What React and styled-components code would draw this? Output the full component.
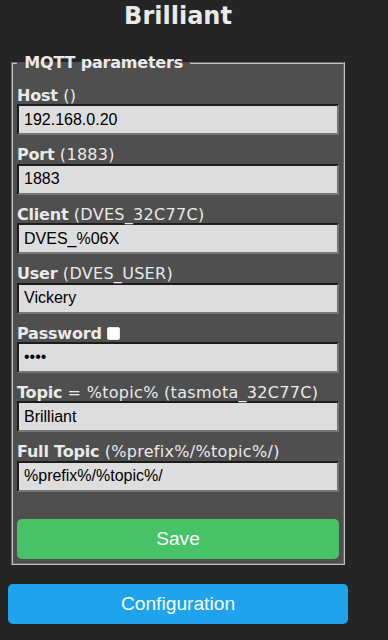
import styled, { createGlobalStyle } from "styled-components";

const GlobalStyle = createGlobalStyle`
  body {
    margin: 0;
    background: #252525;
    font-family: "DejaVu Sans", Verdana, sans-serif;
    font-size: 16px;
  }
`;

const Page = styled.div`
  width: 340px;
  padding: 0 8px;
  color: #eaeaea;
`;

const Title = styled.h2`
  margin: 2px 0 0;
  font-size: 24px;
  line-height: 28px;
  font-weight: bold;
  text-align: center;
`;

const Fieldset = styled.fieldset`
  margin: 25px 3px 0;
  padding: 5px 4px 4px;
  border: 2px groove #c0c0c0;
  background: #4f4f4f;
  min-width: 0;
`;

const Legend = styled.legend`
  padding: 0 2px;
  font-weight: bold;
  line-height: 16px;
  letter-spacing: -0.2px;
`;

const Field = styled.div`
  margin: 8px 0;
`;

// line-height is taller than the box so the text sits a little lower
const Label = styled.div`
  line-height: 23px;
  height: 20.4px;
  white-space: nowrap;
  letter-spacing: 0.3px;

  b {
    letter-spacing: -0.2px;
  }
`;

const Check = styled.input`
  appearance: none;
  width: 13px;
  height: 13px;
  margin: 0 0 0 5px;
  background: #ffffff;
  border: 1px solid #e8e8e8;
  border-radius: 2px;
  vertical-align: -1px;
`;

const Input = styled.input`
  display: block;
  width: 100%;
  height: 31px;
  box-sizing: border-box;
  margin: 0;
  padding: 5px;
  font-family: "Liberation Sans", Arial, sans-serif;
  font-size: 16px;
  color: #000000;
  background: #dddddd;
  border: 2px solid;
  border-color: #1c1c1c #767676 #767676 #1c1c1c;
  outline: none;
`;

const Button = styled.button`
  display: block;
  width: 100%;
  height: 40px;
  margin: ${(p) => p.$gap}px 0 0;
  padding: 0;
  border: 0;
  border-radius: 4.8px;
  background: ${(p) => p.$bg};
  color: #faffff;
  font-family: "Liberation Sans", Arial, sans-serif;
  font-size: 19.2px;
  cursor: pointer;
`;

const fields = [
  { name: "Host", hint: " ()", value: "192.168.0.20" },
  { name: "Port", hint: " (1883)", value: "1883" },
  { name: "Client", hint: " (DVES_32C77C)", value: "DVES_%06X" },
  { name: "User", hint: " (DVES_USER)", value: "Vickery" },
  { name: "Password", check: true, value: "1234", type: "password" },
  { name: "Topic", hint: " = %topic% (tasmota_32C77C)", value: "Brilliant" },
  { name: "Full Topic", hint: " (%prefix%/%topic%/)", value: "%prefix%/%topic%/" },
];

const App = () => {
  return (
    <Page>
      <GlobalStyle />
      <Title>Brilliant</Title>
      <Fieldset>
        <Legend>
          <b>&nbsp;MQTT parameters&nbsp;</b>
        </Legend>
        <form onSubmit={(e) => e.preventDefault()}>
          {fields.map((f) => (
            <Field key={f.name}>
              <Label>
                <b>{f.name}</b>
                {f.hint}
                {f.check && <Check type="checkbox" />}
              </Label>
              <Input type={f.type || "text"} defaultValue={f.value} />
            </Field>
          ))}
          <Button type="submit" $bg="#47c266" $gap={27}>
            Save
          </Button>
        </form>
      </Fieldset>
      <Button type="button" $bg="#1fa3ec" $gap={19}>
        Configuration
      </Button>
    </Page>
  );
};

export default App;
